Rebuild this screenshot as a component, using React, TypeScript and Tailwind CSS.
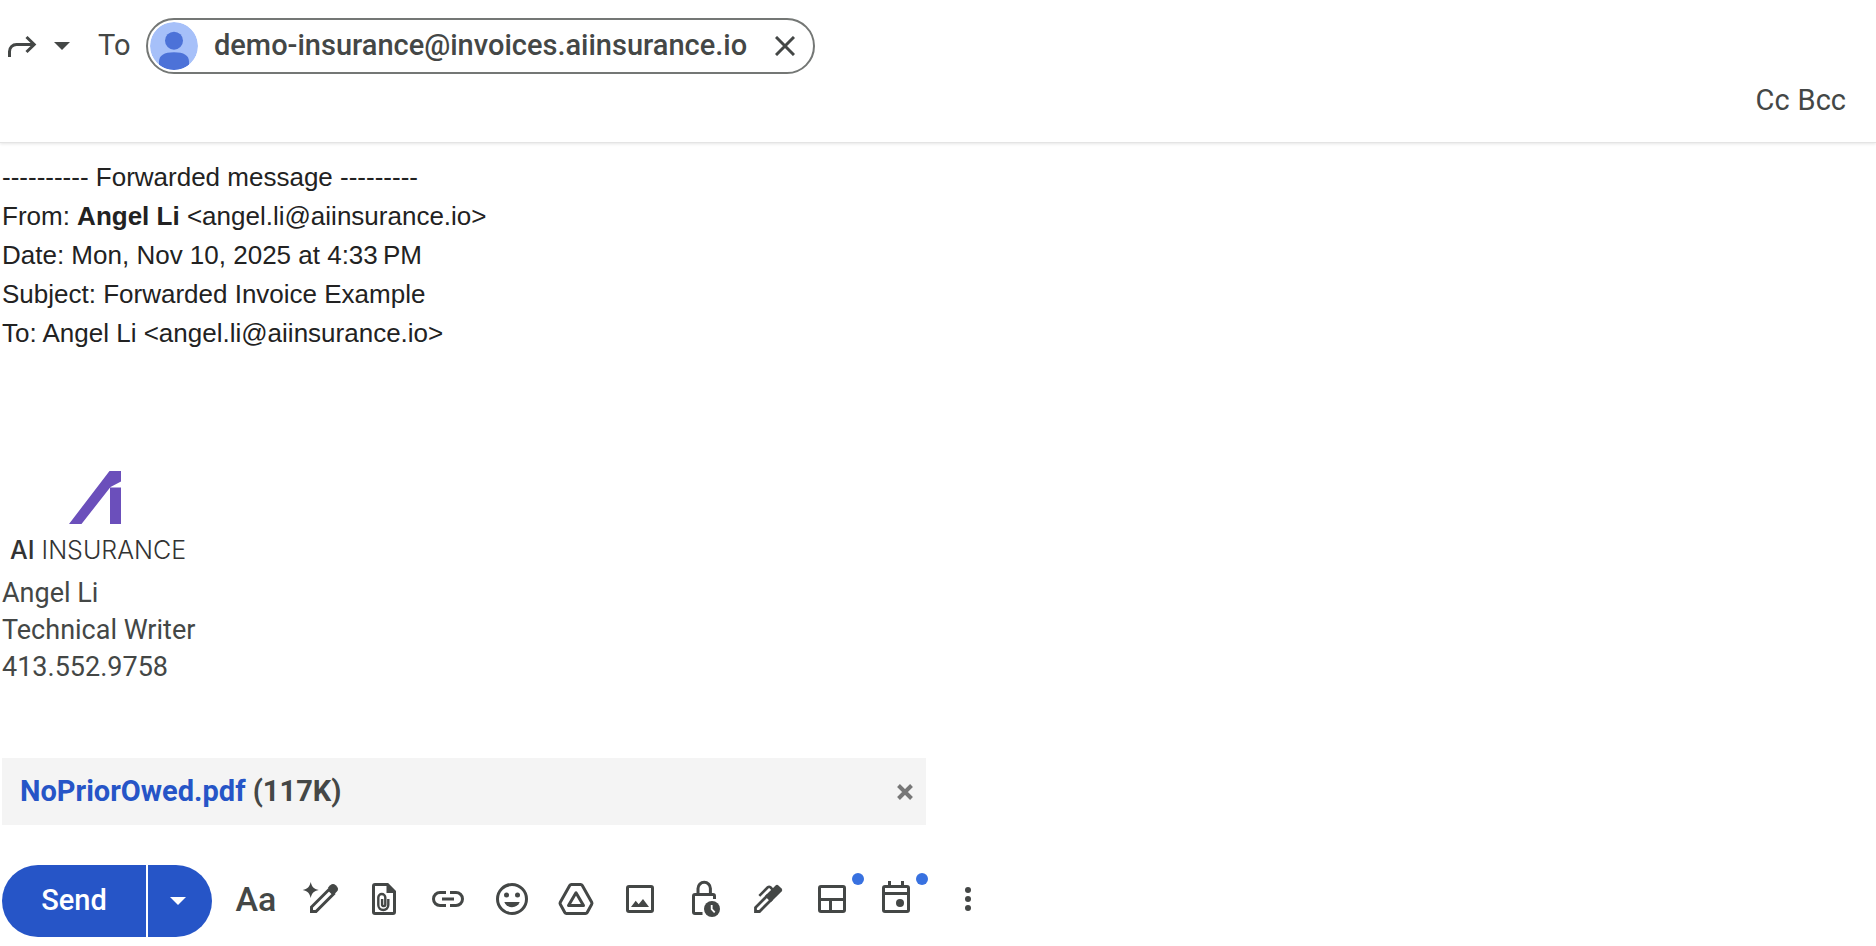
import React, { ReactElement, ReactNode } from "react";

interface Tool {
  label: string;
  icon: ReactElement<SVGSVGElement>;
  hasDot?: boolean;
}

const Icon = ({ children }: { children: ReactNode }) => (
  <svg
    viewBox="0 0 40 40"
    className="size-10"
    fill="none"
    stroke="currentColor"
    strokeWidth="3"
    aria-hidden="true"
  >
    {children}
  </svg>
);

const Caret = () => (
  <svg viewBox="0 0 16 8" className="h-2 w-4" fill="currentColor" aria-hidden="true">
    <path d="M0 0h16L8 8z" />
  </svg>
);

const tools: Tool[] = [
  {
    label: "Help me write",
    icon: (
      <Icon>
        <path
          d="M10.700 3c1.300 5 3 6.700 8 8-5 1.300-6.700 3-8 8-1.300-5-3-6.700-8-8 5-1.300 6.700-3 8-8z"
          fill="currentColor"
          stroke="none"
        />
        <path d="M11.500 32.500v-4.500L29 10.500l4.500 4.500-17.500 17.500z" />
        <path
          d="M28 8.500l2.200-2.200a4 4 0 0 1 5.600 0l.9.9a4 4 0 0 1 0 5.600L34.500 15z"
          fill="currentColor"
          stroke="none"
        />
      </Icon>
    ),
  },
  {
    label: "Attach files",
    icon: (
      <Icon>
        <path d="M23.500 5.500H11A1.500 1.500 0 0 0 9.500 7v26a1.500 1.500 0 0 0 1.500 1.500h18a1.500 1.500 0 0 0 1.500-1.500V12.500z" />
        <path d="M22.500 4.500V14h9z" fill="currentColor" stroke="none" />
        <path
          d="M24.300 20v6a5 5 0 0 1-10 0v-7.500a3.500 3.500 0 0 1 7 0V26a1.700 1.700 0 0 1-3.200 0v-6"
          strokeWidth="2.400"
        />
      </Icon>
    ),
  },
  {
    label: "Insert link",
    icon: (
      <Icon>
        <path d="M18 13.500h-6a6.500 6.500 0 0 0 0 13h6M22 13.500h6a6.500 6.500 0 0 1 0 13h-6M14 20h12" />
      </Icon>
    ),
  },
  {
    label: "Insert emoji",
    icon: (
      <Icon>
        <circle cx="20" cy="20" r="14.500" />
        <g fill="currentColor" stroke="none">
          <circle cx="14.500" cy="16" r="2.500" />
          <circle cx="25.500" cy="16" r="2.500" />
          <path d="M12.300 23h15.400c-1.200 3.200-4 5.200-7.700 5.200s-6.500-2-7.700-5.200z" />
        </g>
      </Icon>
    ),
  },
  {
    label: "Insert files using Drive",
    icon: (
      <Icon>
        <path d="M15.500 5.500h9a2 2 0 0 1 1.800 1l9.400 16.800a2 2 0 0 1 0 2l-4.500 8.200a2 2 0 0 1-1.800 1H10.600a2 2 0 0 1-1.800-1l-4.500-8.200a2 2 0 0 1 0-2L13.700 6.500a2 2 0 0 1 1.800-1z" />
        <path d="M20 13.800l-7.500 12.700h15z" strokeLinejoin="round" />
      </Icon>
    ),
  },
  {
    label: "Insert photo",
    icon: (
      <Icon>
        <rect x="7.500" y="7.500" width="25" height="25" rx="1.500" />
        <path
          d="M11 28l4.700-6.300 3 3.600L23 20l6 8z"
          fill="currentColor"
          stroke="none"
        />
      </Icon>
    ),
  },
  {
    label: "Toggle confidential mode",
    icon: (
      <Icon>
        <path d="M18.500 34.500H11A1.500 1.500 0 0 1 9.500 33V17a1.500 1.500 0 0 1 1.500-1.500h18a1.500 1.500 0 0 1 1.500 1.500v3" />
        <path d="M14 15V9.500a6.200 6.200 0 0 1 12.400 0V15" />
        <circle cx="28" cy="30" r="8" fill="currentColor" stroke="none" />
        <path d="M27.700 26v4.200l3 3.200" stroke="#fff" strokeWidth="1.800" />
      </Icon>
    ),
  },
  {
    label: "Insert signature",
    icon: (
      <Icon>
        <path d="M7.500 32.500v-4L19 17l4 4-11.500 11.500z" strokeWidth="2.800" />
        <path
          d="M17 17L27.600 6.400a2 2 0 0 1 2.800 0l3.200 3.200a2 2 0 0 1 0 2.800L23 23z"
          fill="currentColor"
          stroke="none"
        />
        <path d="M11.300 16.800l8.500-8.500a2 2 0 0 1 2.600 0l2.500 2.500" strokeWidth="2.600" />
      </Icon>
    ),
  },
  {
    label: "Select a layout",
    hasDot: true,
    icon: (
      <Icon>
        <rect x="7.500" y="7.500" width="25" height="25" rx="1.500" />
        <path d="M7 20.500h26M18.500 20.500V33" />
      </Icon>
    ),
  },
  {
    label: "Set up a time to meet",
    hasDot: true,
    icon: (
      <Icon>
        <rect x="7.500" y="7.500" width="25" height="25" rx="1.500" />
        <path d="M7 14.500h26M13.500 2v5M26.500 2v5" />
        <circle cx="24" cy="24" r="4" fill="currentColor" stroke="none" />
      </Icon>
    ),
  },
];

const Recipients = () => (
  <header className="border-b border-[#e4e4e4] pt-[18px] pb-5 shadow-[0_1px_3px_rgba(0,0,0,0.1)]">
    <div className="flex items-center">
      <button type="button" aria-label="Type of response" className="flex items-center gap-4 pl-[6px]">
        <svg
          viewBox="0 0 32 32"
          className="size-8"
          fill="none"
          stroke="currentColor"
          strokeWidth="3"
          aria-hidden="true"
        >
          <path d="M3.500 27v-5.500a7 7 0 0 1 7-7H28M20.500 7l7.700 7.500-7.700 7.500" />
        </svg>
        <Caret />
      </button>
      <label htmlFor="to" className="ml-7 w-12 text-[29px]">
        To
      </label>
      <div className="flex h-14 items-center rounded-full border-2 border-[#747775] pl-[2px] pr-[18px]">
        <svg viewBox="0 0 48 48" className="size-12 rounded-full" aria-hidden="true">
          <circle cx="24" cy="24" r="24" fill="#a6c0f9" />
          <circle cx="24" cy="18.700" r="9" fill="#4c72d8" />
          <path
            d="M9 39.500c0-6 5-9.300 15-9.300s15 3.300 15 9.300v3.200A24 24 0 0 1 9 42.700z"
            fill="#4c72d8"
          />
        </svg>
        <span className="ml-4 text-[29px] font-medium">
          demo-insurance@invoices.aiinsurance.io
        </span>
        <button type="button" aria-label="Remove recipient" className="ml-7">
          <svg viewBox="0 0 20 20" className="size-5" stroke="currentColor" strokeWidth="3" aria-hidden="true">
            <path d="M1 1l18 18M19 1L1 19" />
          </svg>
        </button>
      </div>
      <input id="to" type="text" className="h-14 min-w-0 flex-1 px-4 text-[29px] outline-none" />
    </div>
    <div className="mt-1 flex justify-end gap-2 pr-[30px] text-[29px] leading-[44px]">
      <button type="button">Cc</button>
      <button type="button">Bcc</button>
    </div>
  </header>
);

const Signature = () => (
  <div className="mt-[118px] text-[27px] leading-[37px]">
    <svg viewBox="0 0 52 53" className="ml-[67px] h-[53px] w-[52px]" fill="#6b4fbb" aria-hidden="true">
      <path d="M40.500 0H52v10.500L41.500 16 12.500 53H0zM41 16.500h11V53H41z" />
    </svg>
    <p className="mt-2 ml-2 font-[Inter,sans-serif] text-[25px] font-light text-[#333]">
      <span className="font-medium">AI</span> INSURANCE
    </p>
    <p className="mt-[6px]">Angel Li</p>
    <p>Technical Writer</p>
    <p>413.552.9758</p>
  </div>
);

const Message = () => (
  <main className="pt-[15px] pl-[2px]">
    <div className="font-['Liberation_Sans',Arial,sans-serif] text-[26px] leading-[39px] text-[#222]">
      <p>---------- Forwarded message ---------</p>
      <p>
        From: <strong>Angel Li</strong> &lt;angel.li@aiinsurance.io&gt;
      </p>
      <p>Date: Mon, Nov 10, 2025 at 4:33{"\u202f"}PM</p>
      <p>Subject: Forwarded Invoice Example</p>
      <p>To: Angel Li &lt;angel.li@aiinsurance.io&gt;</p>
    </div>
    <Signature />
    <div className="mt-[72px] flex w-[924px] max-w-full items-center justify-between bg-[#f4f4f4] py-3 pl-[18px] pr-[13px] text-[29px] leading-[43px] font-bold">
      <p>
        <a href="#attachment" className="text-[#2655c7]">
          NoPriorOwed.pdf
        </a>{" "}
        (117K)
      </p>
      <button type="button" aria-label="Remove attachment" className="text-[#777]">
        <svg viewBox="0 0 16 16" className="size-4" stroke="currentColor" strokeWidth="4" aria-hidden="true">
          <path d="M1.500 1.500l13 13M14.500 1.500l-13 13" />
        </svg>
      </button>
    </div>
  </main>
);

const Toolbar = () => (
  <footer className="mt-10 flex items-center pl-[2px]">
    <div className="mr-3 flex h-[72px] gap-[2px] text-[29px] font-medium text-white">
      <button type="button" className="w-36 rounded-l-full bg-[#2655c7]">
        Send
      </button>
      <button
        type="button"
        aria-label="More send options"
        className="flex w-16 items-center justify-center rounded-r-full bg-[#2655c7] pr-1"
      >
        <Caret />
      </button>
    </div>
    <div className="flex items-center pb-1">
      <button
        type="button"
        aria-label="Formatting options"
        className="size-16 text-[34px] font-medium"
      >
        Aa
      </button>
      {tools.map((tool: Tool) => (
        <button
          key={tool.label}
          type="button"
          aria-label={tool.label}
          className="relative flex size-16 items-center justify-center"
        >
          {tool.icon}
          {tool.hasDot && (
            <span className="absolute top-[6px] right-0 size-3 rounded-full bg-[#3871e0]" />
          )}
        </button>
      ))}
      <button
        type="button"
        aria-label="More options"
        className="ml-2 flex size-16 items-center justify-center"
      >
        <svg viewBox="0 0 40 40" className="size-10" fill="currentColor" aria-hidden="true">
          <circle cx="20" cy="11" r="3" />
          <circle cx="20" cy="20" r="3" />
          <circle cx="20" cy="29" r="3" />
        </svg>
      </button>
    </div>
  </footer>
);

const App = () => {
  return (
    <div className="bg-white font-[Roboto,sans-serif] text-[#444746]">
      <Recipients />
      <Message />
      <Toolbar />
    </div>
  );
};

export default App;
